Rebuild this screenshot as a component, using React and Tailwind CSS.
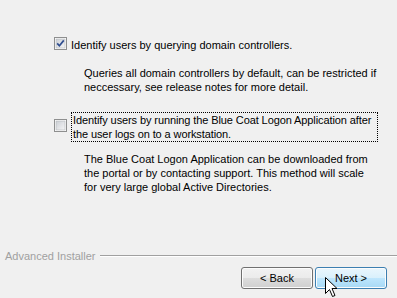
const CheckBox = ({ checked }) => (
  <svg width="13" height="13" viewBox="0 0 13 13" className="shrink-0">
    <defs>
      <linearGradient id={checked ? "cbg1" : "cbg2"} x1="0" y1="0" x2="1" y2="1">
        <stop offset="0" stopColor="#cbcfd5" />
        <stop offset="1" stopColor="#f6f6f6" />
      </linearGradient>
    </defs>
    <rect x="0.5" y="0.5" width="12" height="12" fill="#fff" stroke="#8e8f8f" />
    <rect x="2" y="2" width="9" height="9" fill={`url(#${checked ? "cbg1" : "cbg2"})`} stroke="#b3b6ba" strokeWidth="0.6" />
    {checked && (
      <path d="M3.2 6.4 L5.4 8.8 L9.8 3.4" fill="none" stroke="#2f4d8f" strokeWidth="1.7" />
    )}
  </svg>
);

const Cursor = () => (
  <svg width="14" height="22" viewBox="0 0 14 22" className="absolute left-[325px] top-[277px]">
    <path
      d="M0.5 0.5 L0.5 16.5 L4.5 12.5 L7.5 19.5 L10 18.5 L7 11.5 L12 11.5 Z"
      fill="#fff"
      stroke="#000"
      strokeWidth="1"
      strokeLinejoin="miter"
    />
  </svg>
);

export default function App() {
  return (
    <div className="relative w-[397px] h-[298px] overflow-hidden bg-[#f0f0f0] text-[11px] leading-[14px] text-black whitespace-nowrap font-['Liberation_Sans',Arial,sans-serif]">
      {/* Options */}
      <div className="pt-[37px] pl-[54px]">
        <div className="flex items-start gap-[4px]">
          <CheckBox checked />
          <span className="pt-[1px]">Identify users by querying domain controllers.</span>
        </div>
        <div className="mt-[14px] pl-[30px]">
          <p>Queries all domain controllers by default, can be restricted if</p>
          <p>neccessary, see release notes for more detail.</p>
        </div>

        <div className="mt-[18px] flex items-start gap-[4px]">
          <div className="pt-[7px]">
            <CheckBox />
          </div>
          <div className="w-[307px] border border-dotted border-black px-[1px] tracking-[-0.1px]">
            <p>Identify users by running the Blue Coat Logon Application after</p>
            <p>the user logs on to a workstation.</p>
          </div>
        </div>
        <div className="mt-[10px] pl-[30px]">
          <p>The Blue Coat Logon Application can be downloaded from</p>
          <p>the portal or by contacting support. This method will scale</p>
          <p>for very large global Active Directories.</p>
        </div>
      </div>

      {/* Footer */}
      <div className="absolute left-0 right-0 top-[249px]">
        <div className="flex items-center pl-[5px]">
          <span className="text-[#a0a0a0]">Advanced Installer</span>
          <div className="ml-[4px] flex-1 border-t border-[#a0a0a0] border-b border-b-white" />
        </div>
        <div className="mt-[4px] flex justify-end gap-[2px] pr-[10px]">
          <button className="w-[72px] h-[22px] rounded-[3px] border border-[#707070] bg-[linear-gradient(#f2f2f2_0%,#ebebeb_50%,#dddddd_51%,#cfcfcf_100%)] shadow-[inset_0_0_0_1px_#fcfcfc] text-[11px]">
            &lt; Back
          </button>
          <button className="w-[72px] h-[22px] rounded-[3px] border border-[#3c7fb1] bg-[linear-gradient(#eaf6fd_0%,#d9f0fc_50%,#bee6fd_51%,#a7d9f5_100%)] shadow-[inset_0_0_0_1px_#fcfcfc] text-[11px]">
            Next &gt;
          </button>
        </div>
      </div>

      <Cursor />
    </div>
  );
}
